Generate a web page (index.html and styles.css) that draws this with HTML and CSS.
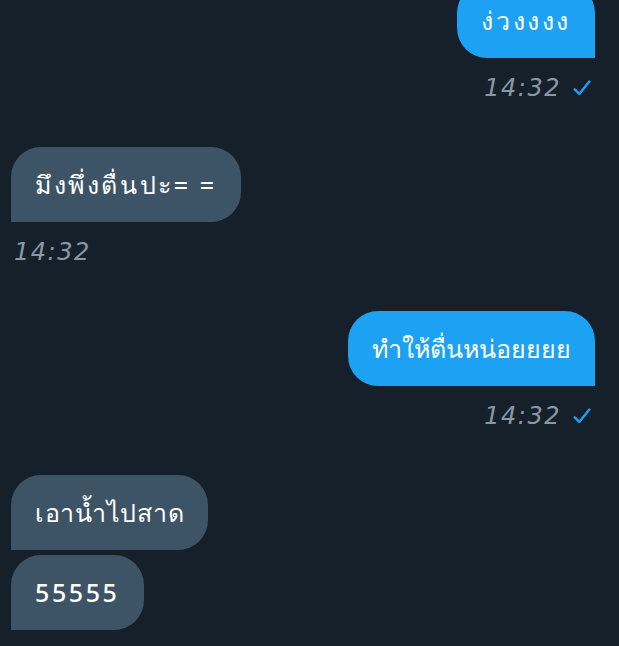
FILE: index.html
```html
<!DOCTYPE html>
<html lang="th">
<head>
    <meta charset="UTF-8">
    <meta name="viewport" content="width=device-width, initial-scale=1.0">
    <title>Messages</title>
    <link rel="stylesheet" href="styles.css">
</head>
<body>
    <div class="chat">
        <div class="msg sent first">
            <div class="bubble spaced">ง่วงงงง</div>
            <div class="meta">
                <span class="time">14:32</span>
                <svg class="check" viewBox="0 0 24 24" width="22" height="22"><path d="M4 13.5l5 5L20 5" fill="none" stroke="#1da1f2" stroke-width="2.6" stroke-linecap="round" stroke-linejoin="round"/></svg>
            </div>
        </div>

        <div class="msg received">
            <div class="bubble spaced">มึงพึ่งตื่นปะ= =</div>
            <div class="meta">
                <span class="time">14:32</span>
            </div>
        </div>

        <div class="msg sent">
            <div class="bubble">ทำให้ตื่นหน่อยยยย</div>
            <div class="meta">
                <span class="time">14:32</span>
                <svg class="check" viewBox="0 0 24 24" width="22" height="22"><path d="M4 13.5l5 5L20 5" fill="none" stroke="#1da1f2" stroke-width="2.6" stroke-linecap="round" stroke-linejoin="round"/></svg>
            </div>
        </div>

        <div class="msg received">
            <div class="bubble slight">เอาน้ำไปสาด</div>
            <div class="bubble spaced">55555</div>
        </div>
    </div>
</body>
</html>
```

FILE: styles.css
```css
* {
    margin: 0;
    padding: 0;
    box-sizing: border-box;
}

body {
    background: #16202b;
    font-family: 'Noto Sans', 'Liberation Sans', sans-serif;
    overflow: hidden;
}

.chat {
    display: flex;
    flex-direction: column;
    padding: 0 24px 0 11px;
}

.msg {
    display: flex;
    flex-direction: column;
    gap: 5px;
    margin-bottom: 47px;
}

.msg.first {
    margin-top: -17px;
}

.msg.sent {
    align-items: flex-end;
}

.msg.received {
    align-items: flex-start;
}

.bubble {
    color: #fff;
    font-size: 25px;
    font-weight: 500;
    line-height: 35px;
    height: 75px;
    padding: 20px 24px;
    white-space: nowrap;
}

.bubble.spaced {
    letter-spacing: 2.6px;
}

.bubble.slight {
    letter-spacing: 0.7px;
}

.sent .bubble {
    background: #1da1f2;
    border-radius: 30px 30px 0 30px;
}

.received .bubble {
    background: #3d5466;
    border-radius: 30px 30px 30px 0;
}

.meta {
    display: flex;
    align-items: center;
    gap: 10px;
    height: 24px;
    margin-top: 13px;
}

.received .meta {
    padding-left: 3px;
}

.sent .meta {
    padding-right: 2px;
}

.time {
    color: #8a98a5;
    font-size: 24px;
    font-style: italic;
    font-family: 'DejaVu Sans', sans-serif;
    font-weight: 300;
    letter-spacing: 1.5px;
}

.check {
    display: block;
}
```
